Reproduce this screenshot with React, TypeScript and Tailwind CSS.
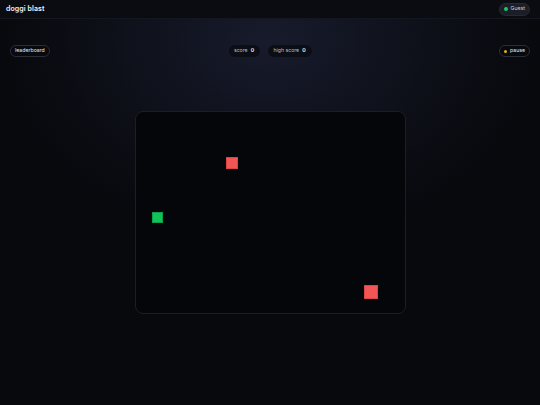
import React from "react";

function Pill({ children, className = "" }: { children: React.ReactNode; className?: string }) {
  return (
    <div
      className={`flex items-center h-[12px] rounded-full text-[5.2px] leading-none ${className}`}
    >
      {children}
    </div>
  );
}

export default function App() {
  return (
    <div
      className="relative w-[540px] h-[405px] overflow-hidden bg-[#08090d] text-white"
      style={{ fontFamily: "Inter, 'Open Sans', sans-serif" }}
    >
      <div className="absolute inset-0 bg-[radial-gradient(ellipse_270px_200px_at_270px_40px,#171b2c_0%,#10121d_45%,#08090d_100%)]" />
      <div className="relative flex flex-col">
        <header className="flex items-center justify-between h-[19px] pl-[6px] pr-[10px] bg-[#0b0c11] border-b border-[#151720]">
          <span className="text-[7px] font-semibold tracking-[0.1px] text-[#f1f2f5]">doggi blast</span>
          <Pill className="px-[4px] h-[13px] bg-[#1b1e27] border border-[#262a34] gap-[3px]">
            <span className="w-[4px] h-[4px] rounded-full bg-[#22c55e]" />
            <span className="text-[#c8cad1]">Guest</span>
          </Pill>
        </header>

        <div className="grid grid-cols-[1fr_auto_1fr] items-center px-[10px] mt-[26px]">
          <div className="flex">
            <Pill className="px-[4px] bg-[#08090d] border border-[#2a2d37] text-[#e6e7ea]">leaderboard</Pill>
          </div>
          <div className="flex gap-[8px]">
            <Pill className="px-[5px] bg-[#0c0e15] gap-[3px] w-[31px] justify-center">
              <span className="text-[#b9bcc6]">score</span>
              <span className="font-semibold text-white">0</span>
            </Pill>
            <Pill className="px-[5px] bg-[#0c0e15] gap-[3px] w-[44px] justify-center">
              <span className="text-[#b9bcc6]">high score</span>
              <span className="font-semibold text-white">0</span>
            </Pill>
          </div>
          <div className="flex justify-end">
            <Pill className="px-[4px] bg-[#08090d] border border-[#2a2d37] gap-[3px]">
              <span className="w-[3px] h-[3px] rounded-full bg-[#eab308]" />
              <span className="text-[#e6e7ea]">pause</span>
            </Pill>
          </div>
        </div>

        <div className="flex justify-center mt-[54px]">
          <div className="relative w-[271px] h-[203px] rounded-[8px] bg-[#050609] border border-[#1c1e26]">
            <div className="absolute left-[90px] top-[45px] w-[12px] h-[12px] bg-[#f25555] border border-[#d94444]" />
            <div className="absolute left-[16px] top-[100px] w-[11px] h-[11px] bg-[#0fc35a] border border-[#0c9e49]" />
            <div className="absolute left-[228px] top-[173px] w-[14px] h-[14px] bg-[#f25555] border border-[#d94444]" />
          </div>
        </div>
      </div>
    </div>
  );
}
